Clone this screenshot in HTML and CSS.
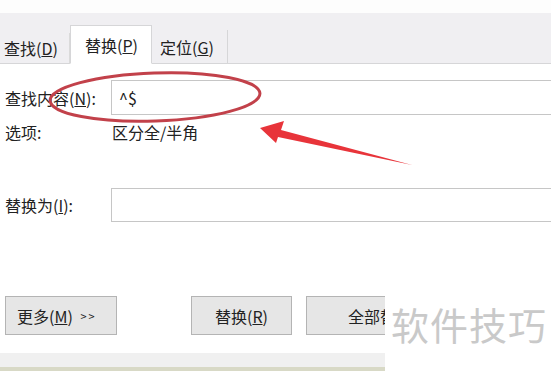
FILE: index.html
```html
<!DOCTYPE html>
<html lang="zh-CN">
<head>
    <meta charset="UTF-8">
    <link rel="stylesheet" href="styles.css">
    <title>查找和替换</title>
</head>
<body>
    <div class="dialog">
        <div class="titlebar"></div>
        <div class="tabbar">
            <div class="tab tab-find">查找(<u>D</u>)</div>
            <div class="tab tab-replace">替换(<u>P</u>)</div>
            <div class="tab tab-goto">定位(<u>G</u>)</div>
        </div>

        <div class="form">
            <div class="row row-find">
                <label class="label">查找内容(<u>N</u>):</label>
                <div class="field">^$</div>
            </div>
            <div class="row row-options">
                <span class="label">选项:</span>
                <span class="value">区分全/半角</span>
            </div>
            <div class="row row-replace">
                <label class="label">替换为(<u>I</u>):</label>
                <div class="field"></div>
            </div>
            <div class="buttons">
                <button class="btn btn-more">更多(<u>M</u>) <span class="chev">&gt;&gt;</span></button>
                <button class="btn btn-replace">替换(<u>R</u>)</button>
                <button class="btn btn-all">全部替</button>
            </div>
        </div>

        <div class="statusbar"></div>

        <!-- red marks drawn over the screenshot -->
        <svg class="marks" width="551" height="371" viewBox="0 0 551 371">
            <ellipse cx="155" cy="97" rx="105" ry="24" transform="rotate(-2 155 97)" fill="none" stroke="#c2414a" stroke-width="3"/>
            <polygon points="260,128 284,121 281,130 412,165 278,137 276,143" fill="#e8343a"/>
        </svg>

        <div class="watermark">软件技巧</div>
    </div>
</body>
</html>
```

FILE: styles.css
```css
*{
    padding: 0;
    margin: 0;
    box-sizing: border-box;
}

body{
    background: #fff;
    font-family: "Noto Sans CJK SC", "Liberation Sans", sans-serif;
    color: #222;
}

.dialog{
    position: relative;
    width: 551px;
    height: 371px;
    overflow: hidden;
    background: #fff;
}

.titlebar{
    height: 13px;
    background: #fdfdfd;
}

.tabbar{
    height: 51px;
    background: #f0eff2;
    border-bottom: 1px solid #d6d6d8;
    display: flex;
    align-items: flex-end;
}

.tab{
    font-size: 16px;
    line-height: 1;
    display: flex;
    align-items: center;
    margin-bottom: -1px;
}

.tab-find{
    width: 70px;
    height: 31px;
    padding-left: 4px;
    border-right: 1px solid #dadada;
    border-bottom: 1px solid #d6d6d8;
}

.tab-replace{
    width: 82px;
    height: 39px;
    padding-left: 14px;
    background: #fff;
    border: 1px solid #d6d6d8;
    border-bottom: 1px solid #fff;
}

.tab-goto{
    width: 76px;
    height: 34px;
    padding-left: 8px;
    border-right: 1px solid #d6d6d8;
    border-bottom: 1px solid #d6d6d8;
}

.form{
    padding-top: 16px;
}

.row{
    display: flex;
    align-items: center;
    font-size: 16px;
}

.label{
    width: 111px;
    padding-left: 5px;
}

.field{
    flex: 1;
    height: 100%;
    border: 1px solid #c6c6c6;
    border-right: none;
    padding-left: 7px;
    display: flex;
    align-items: center;
    font-size: 16px;
}

.row-find{
    height: 35px;
}

.row-options{
    height: 18px;
    margin-top: 8px;
}

.row-options .label{
    width: 112px;
}

.row-replace{
    height: 34px;
    margin-top: 47px;
}

.buttons{
    margin-top: 74px;
    display: flex;
    padding-left: 5px;
}

.btn{
    height: 39px;
    background: #e6e6e6;
    border: 1px solid #b4b4b4;
    font-family: inherit;
    font-size: 16px;
    color: #222;
}

.btn-more{
    width: 112px;
    text-align: left;
    padding-left: 11px;
}

.chev{
    font-size: 11px;
    letter-spacing: 2px;
    margin-left: 4px;
    vertical-align: 2px;
}

.btn-replace{
    width: 101px;
    margin-left: 74px;
}

.btn-all{
    width: 79px;
    margin-left: 14px;
    border-right: none;
    text-align: left;
    padding-left: 41px;
    white-space: nowrap;
    overflow: hidden;
}

.statusbar{
    position: absolute;
    left: 0;
    top: 353px;
    width: 385px;
    height: 18px;
    background: #f0f0f0;
    border-bottom: 4px solid #d8d9c6;
}

.marks{
    position: absolute;
    left: 0;
    top: 0;
    pointer-events: none;
}

.watermark{
    position: absolute;
    left: 385px;
    top: 283px;
    width: 166px;
    height: 88px;
    background: #fff;
    color: #c9c9c9;
    font-size: 38px;
    padding: 18px 0 0 6px;
    line-height: 1.2;
    letter-spacing: 1px;
    white-space: nowrap;
}
```
